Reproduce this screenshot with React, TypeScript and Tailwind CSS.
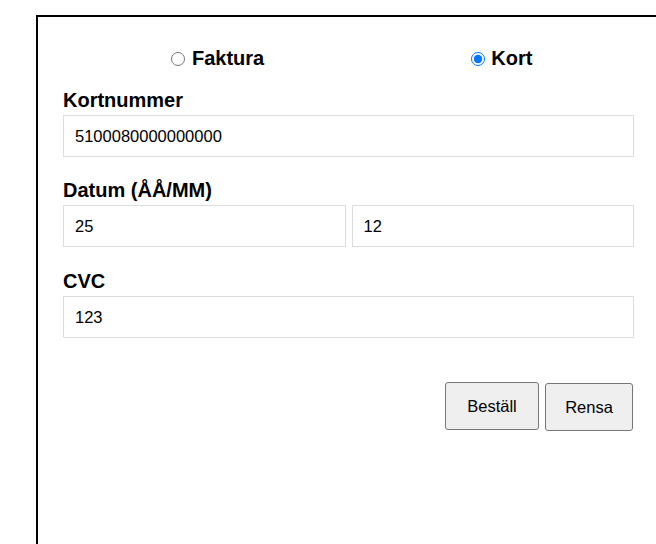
import { useState } from "react";

const inputCls =
  "block h-[42px] w-full border border-[#dcdcdc] bg-white px-[11px] text-[16.5px] text-black outline-none";
const labelCls = "block text-[20px] font-bold leading-[23px] text-black mb-[3px]";

export default function App() {
  const [method, setMethod] = useState<"faktura" | "kort">("kort");
  const [card, setCard] = useState("5100080000000000");
  const [year, setYear] = useState("25");
  const [month, setMonth] = useState("12");
  const [cvc, setCvc] = useState("123");

  const reset = () => {
    setCard("");
    setYear("");
    setMonth("");
    setCvc("");
  };

  return (
    <div
      className="h-[544px] w-[656px] overflow-hidden bg-white"
      style={{ fontFamily: '"Liberation Sans", Arial, sans-serif' }}
    >
      <form
        className="ml-[36px] mt-[15px] h-[600px] w-[625px] border-2 border-black px-[25px] pt-[30px]"
        onSubmit={(e) => e.preventDefault()}
      >
        <div className="flex h-[23px] items-center text-[20px] font-bold leading-[23px]">
          <label className="ml-[108px] flex items-center gap-[7px]">
            <input
              type="radio"
              name="method"
              className="m-0 h-[14px] w-[14px]"
              checked={method === "faktura"}
              onChange={() => setMethod("faktura")}
            />
            Faktura
          </label>
          <label className="ml-[207px] flex items-center gap-[6px]">
            <input
              type="radio"
              name="method"
              className="m-0 h-[14px] w-[14px]"
              checked={method === "kort"}
              onChange={() => setMethod("kort")}
            />
            Kort
          </label>
        </div>

        <div className="mt-[19px]">
          <label className={labelCls}>Kortnummer</label>
          <input className={inputCls} value={card} onChange={(e) => setCard(e.target.value)} />
        </div>

        <div className="mt-[22px]">
          <label className={labelCls}>Datum (ÅÅ/MM)</label>
          <div className="flex gap-[6px]">
            <input className={inputCls} value={year} onChange={(e) => setYear(e.target.value)} />
            <input className={inputCls} value={month} onChange={(e) => setMonth(e.target.value)} />
          </div>
        </div>

        <div className="mt-[23px]">
          <label className={labelCls}>CVC</label>
          <input className={inputCls} value={cvc} onChange={(e) => setCvc(e.target.value)} />
        </div>

        <div className="mr-[1px] mt-[44px] flex justify-end gap-[6px]">
          <button
            type="submit"
            className="h-[48px] w-[94px] rounded-[3px] border border-[#767676] bg-[#efefef] text-[16.5px] text-black"
          >
            Beställ
          </button>
          <button
            type="button"
            onClick={reset}
            className="mt-[1px] h-[48px] w-[88px] rounded-[3px] border border-[#767676] bg-[#efefef] text-[16.5px] text-black"
          >
            Rensa
          </button>
        </div>
      </form>
    </div>
  );
}
